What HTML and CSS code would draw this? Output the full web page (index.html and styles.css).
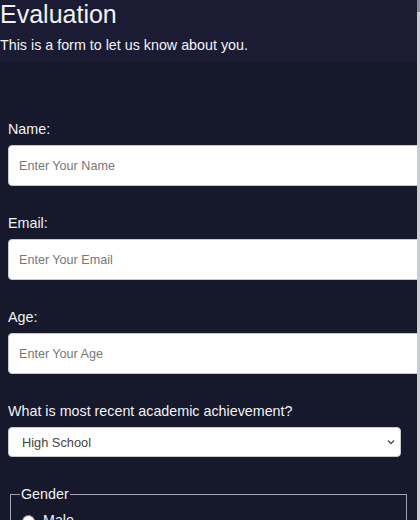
FILE: index.html
```html
<!DOCTYPE html>
<html lang="en">
<head>
<meta charset="utf-8">
<title>Evaluation</title>
<link rel="stylesheet" href="styles.css">
</head>
<body>
<header class="header">
  <h1 class="title">Evaluation</h1>
  <p class="subtitle">This is a form to let us know about you.</p>
</header>
<form class="form">
  <div class="group">
    <label class="label" for="name">Name:</label>
    <input class="field" id="name" type="text" placeholder="Enter Your Name">
  </div>
  <div class="group">
    <label class="label" for="email">Email:</label>
    <input class="field" id="email" type="email" placeholder="Enter Your Email">
  </div>
  <div class="group">
    <label class="label" for="age">Age:</label>
    <input class="field" id="age" type="number" placeholder="Enter Your Age">
  </div>
  <div class="group">
    <label class="label" for="edu">What is most recent academic achievement?</label>
    <div class="select-wrap">
      <select class="select" id="edu">
        <option>High School</option>
        <option>Bachelor's Degree</option>
        <option>Master's Degree</option>
      </select>
      <svg class="chevron" width="8" height="6" viewBox="0 0 8 6" aria-hidden="true">
        <path d="M1 1.5 L4 4.5 L7 1.5" fill="none" stroke="#555" stroke-width="1.5"/>
      </svg>
    </div>
  </div>
  <fieldset class="fieldset">
    <legend class="legend">Gender</legend>
    <label class="radio-row"><input class="radio" type="radio" name="g"> Male</label>
    <label class="radio-row"><input class="radio" type="radio" name="g"> Female</label>
  </fieldset>
</form>
<div class="scrollbar" aria-hidden="true"><div class="scrollbar-thumb"></div></div>
</body>
</html>
```

FILE: styles.css
```css
body {
  margin: 0 3px 0 0;
  background: #16182b;
  color: #f2f2f5;
  font-family: "Liberation Sans", Arial, sans-serif;
}

.header {
  background: #1b1c33;
  padding: 0 0 9px 0;
}

.title {
  margin: 0;
  font-size: 25px;
  font-weight: normal;
  line-height: 29px;
}

.subtitle {
  margin: 8px 0 0 0;
  font-size: 14.3px;
  line-height: 16px;
}

.form {
  padding: 59px 8px 40px 8px;
  overflow-x: clip;
}

.group {
  margin-bottom: 29px;
}

.label {
  display: block;
  font-size: 14.3px;
  line-height: 16px;
  margin-bottom: 8px;
}

.field {
  display: block;
  box-sizing: content-box;
  width: 100%;
  height: 39px;
  padding: 0 10px;
  margin: 0;
  border: 1px solid #c8c8cc;
  border-radius: 4px;
  background: #fff;
  font-family: "Liberation Sans", Arial, sans-serif;
  font-size: 12.6px;
  color: #333;
}

.field::placeholder { color: #777; }

.select-wrap {
  position: relative;
  width: 98%;
}

.select {
  display: block;
  width: 100%;
  height: 30px;
  margin: 0;
  padding: 0 20px 0 13px;
  border: 1px solid #c8c8cc;
  border-radius: 4px;
  background-color: #fff;
  appearance: none;
  -webkit-appearance: none;
  font-family: "Liberation Sans", Arial, sans-serif;
  font-size: 12.8px;
  color: #444;
}

.chevron {
  position: absolute;
  right: 6px;
  top: 12px;
  pointer-events: none;
}

.fieldset {
  margin: 0 2px;
  padding: 10px 9px 10px 9px;
  border: 1px solid #a4a4b0;
  border-radius: 0;
}

.legend {
  padding: 0 1px;
  font-size: 14.3px;
  line-height: 16px;
}

.radio-row {
  display: flex;
  align-items: center;
  gap: 8px;
  font-size: 14.3px;
  margin-bottom: 8px;
}

.radio {
  width: 13px;
  height: 13px;
  margin: 3px 0 0 2px;
}

.scrollbar {
  position: fixed;
  top: 0;
  right: 0;
  width: 3px;
  height: 100%;
  background: #8e8fa0;
}

.scrollbar-thumb {
  margin-top: 12px;
  height: calc(100% - 12px);
  background: #cdcdd5;
}
```
